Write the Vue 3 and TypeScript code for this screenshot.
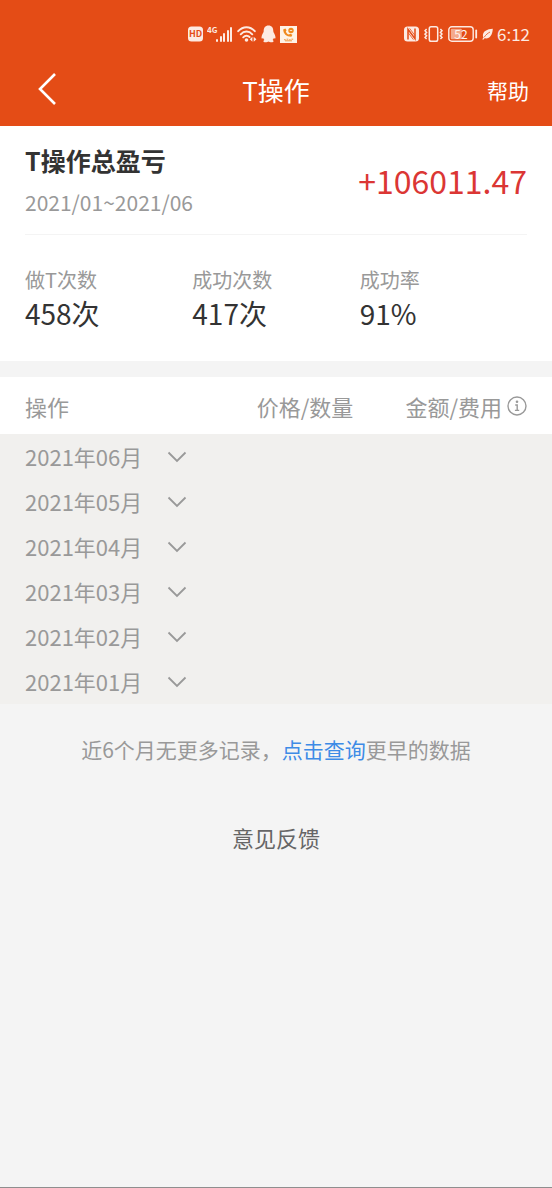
<script setup lang="ts">
import { ref } from 'vue'

interface Stat {
  label: string
  value: string
}

const stats: Stat[] = [
  { label: '做T次数', value: '458次' },
  { label: '成功次数', value: '417次' },
  { label: '成功率', value: '91%' },
]

const months: string[] = ['06', '05', '04', '03', '02', '01'].map((m) => `2021年${m}月`)
const opened = ref<string | null>(null)

function toggle(month: string): void {
  opened.value = opened.value === month ? null : month
}
</script>

<template>
  <div class="page">
    <header class="top">
      <div class="status">
        <div class="status-group">
          <svg width="15" height="16" viewBox="0 0 15 16">
            <rect x="0" y="0.5" width="15" height="15" rx="3.5" fill="#fdeae2" />
            <text x="7.5" y="11.3" text-anchor="middle" font-size="9" font-weight="700" fill="#e44c16">HD</text>
          </svg>
          <svg width="26" height="18" viewBox="0 0 26 18">
            <text x="0" y="8" font-size="8" font-weight="700" fill="#fdeae2">4G</text>
            <g fill="#fdeae2">
              <rect x="9" y="14" width="2" height="3" rx="1" />
              <rect x="13" y="11" width="2" height="6" rx="1" />
              <rect x="16" y="8" width="2" height="9" rx="1" />
              <rect x="20" y="5" width="2" height="12" rx="1" />
              <rect x="23" y="2" width="2" height="15" rx="1" />
            </g>
          </svg>
          <svg width="20" height="18" viewBox="0 0 20 18">
            <g fill="none" stroke="#fdeae2" stroke-width="1.9" stroke-linecap="round">
              <path d="M1.2 6.2C6 0.9 13 0.9 17.8 6.2" />
              <path d="M3.7 9.3C7 5.6 12 5.6 15.3 9.3" />
              <path d="M6.2 12.3C8.2 10.2 10.8 10.2 12.6 12" />
            </g>
            <circle cx="9.5" cy="15" r="1.8" fill="#fdeae2" />
            <path d="M15.4 11.8v5L12.8 14.3zM16.7 11.8v5l2.7-2.5z" fill="#fdeae2" />
          </svg>
          <svg width="15" height="18" viewBox="0 0 15 18">
            <path
              d="M7.5 0.6C4.2 0.6 2.6 3 2.7 6.2C2.6 7.5 0.6 9.8 0.5 12.3C0.5 14 1.2 14 2 12.8C2.3 13.7 2.8 14.4 3.4 14.9C2 15.5 2 17.3 4.4 17.3C5.8 17.3 7 16.9 7.5 16.5C8 16.9 9.2 17.3 10.6 17.3C13 17.3 13 15.5 11.6 14.9C12.2 14.4 12.7 13.7 13 12.8C13.8 14 14.5 14 14.5 12.3C14.4 9.8 12.4 7.5 12.3 6.2C12.4 3 10.8 0.6 7.5 0.6z"
              fill="#fdeae2"
            />
          </svg>
          <svg width="17" height="17" viewBox="0 0 17 17">
            <rect width="17" height="17" fill="#fff3e6" />
            <path d="M3.2 3.4C3.4 7.6 6 10.5 11.4 10.7L12.4 8.8L10.2 7.7L9 8.6C7.4 8 6.3 6.9 5.8 5.4L6.6 4.3L5.3 2.5z" fill="#f08a1d" />
            <circle cx="11" cy="4.5" r="2.7" fill="#f08a1d" />
            <path d="M9.8 4.5h2.4" stroke="#fff3e6" stroke-width="0.8" />
            <path d="M4 13.7h1.7M6.6 13.2h1.7M9.2 13.7h1.4M11.4 13.2h1.8M5 14.8h7" stroke="#ee9a48" stroke-width="1" />
          </svg>
        </div>
        <div class="status-group">
          <svg width="16" height="16" viewBox="0 0 16 16">
            <rect x="0" y="0.5" width="15" height="15" rx="3.5" fill="#fdeae2" />
            <path d="M4 13.6V3.2L11 12.8V2.4" fill="none" stroke="#e44c16" stroke-width="1.5" />
            <path d="M5.6 2.4L11 9.6M4 6.4L9.4 13.6" stroke="#e44c16" stroke-width="0.8" />
          </svg>
          <svg width="20" height="16" viewBox="0 0 20 16">
            <g fill="none" stroke="#fdeae2" stroke-width="1.5">
              <rect x="5.3" y="0.8" width="8.4" height="14.4" rx="1.8" />
              <path d="M2.6 3L1 4.7L2.6 6.4L1 8.1L2.6 9.8L1 11.5L2.6 13M16.4 3L18 4.7L16.4 6.4L18 8.1L16.4 9.8L18 11.5L16.4 13" />
            </g>
          </svg>
          <div class="battery">
            <svg width="30" height="16" viewBox="0 0 30 16">
              <rect x="0.8" y="0.8" width="24.4" height="14.4" rx="3" fill="none" stroke="#fdeae2" stroke-width="1.4" />
              <rect x="2.8" y="2.8" width="11" height="10.4" rx="1" fill="#f4a98d" />
              <path d="M28.2 4.5v7" stroke="#fdeae2" stroke-width="1.8" stroke-linecap="round" />
            </svg>
            <span class="level">52</span>
          </div>
          <svg width="11" height="12" viewBox="0 0 11 12">
            <path d="M10.8 0.8C5 1 0.9 3.4 0.9 7.5C0.9 8.4 1.1 9 1.5 9.5L0.3 11.2L1.2 11.8L2.6 10.3C7.4 11.3 10.4 7.5 10.8 0.8z" fill="#fdeae2" />
            <path d="M2.2 9.2C4 6.6 5.8 5.2 8 4" fill="none" stroke="#e44c16" stroke-width="0.8" />
          </svg>
          <span class="clock">6:12</span>
        </div>
      </div>
      <nav class="nav">
        <button class="back" type="button" aria-label="返回">
          <svg width="20" height="34" viewBox="0 0 20 34">
            <path d="M18 2L3 17L18 32" fill="none" stroke="#fff" stroke-width="2.6" />
          </svg>
        </button>
        <h1 class="title">T操作</h1>
        <a class="help" href="#help">帮助</a>
      </nav>
    </header>

    <section class="card">
      <div class="summary">
        <div>
          <h2 class="heading">T操作总盈亏</h2>
          <p class="range">2021/01~2021/06</p>
        </div>
        <p class="profit">+106011.47</p>
      </div>
      <dl class="stats">
        <div v-for="s in stats" :key="s.label" class="stat">
          <dt>{{ s.label }}</dt>
          <dd>{{ s.value }}</dd>
        </div>
      </dl>
    </section>

    <table class="records">
      <thead>
        <tr>
          <th class="col-op" scope="col">操作</th>
          <th class="col-price" scope="col">价格/数量</th>
          <th class="col-amount" scope="col">
            <span class="with-info">
              金额/费用
              <button class="info" type="button" aria-label="费用说明">
                <svg width="20" height="20" viewBox="0 0 20 20">
                  <circle cx="10" cy="10" r="9" fill="none" stroke="#999" stroke-width="1.4" />
                  <circle cx="10" cy="5.7" r="1.3" fill="#999" />
                  <path d="M8.2 9H10.2V14.2M7.9 14.4H12.2" fill="none" stroke="#999" stroke-width="1.4" />
                </svg>
              </button>
            </span>
          </th>
        </tr>
      </thead>
      <tbody>
        <tr v-for="m in months" :key="m">
          <td colspan="3">
            <button class="month" type="button" :aria-expanded="opened === m" @click="toggle(m)">
              {{ m }}
              <svg width="20" height="12" viewBox="0 0 20 12">
                <path d="M1.5 1.5L10 10L18.5 1.5" fill="none" stroke="#999" stroke-width="1.8" />
              </svg>
            </button>
          </td>
        </tr>
      </tbody>
    </table>

    <p class="more">近6个月无更多记录，<a href="#earlier">点击查询</a>更早的数据</p>
    <a class="feedback" href="#feedback">意见反馈</a>
  </div>
</template>

<style>
body {
  margin: 0;
}
</style>

<style scoped>
.page {
  display: flex;
  flex-direction: column;
  box-sizing: border-box;
  min-height: 100vh;
  border-bottom: 1px solid #8e8e8e;
  background: #f4f4f4;
  color: #999;
  font-family: "Noto Sans CJK SC", sans-serif;
}
h1,
h2,
p,
dl,
dd {
  margin: 0;
}
button {
  padding: 0;
  border: 0;
  background: none;
  color: inherit;
  font: inherit;
  cursor: pointer;
}
a {
  text-decoration: none;
}
svg {
  display: block;
  flex: none;
}
.top {
  background: #e44c16;
  color: #fff;
}
.status {
  display: flex;
  justify-content: space-between;
  align-items: center;
  box-sizing: border-box;
  height: 56px;
  padding: 12px 22px 0 34%;
}
.status-group {
  display: flex;
  align-items: center;
  gap: 4px;
}
.battery {
  position: relative;
}
.level {
  position: absolute;
  top: 0;
  left: 0;
  width: 26px;
  color: #fff5f0;
  font-size: 12px;
  line-height: 16px;
  text-align: center;
}
.clock {
  color: #fdeae2;
  font-size: 17px;
  line-height: 20px;
}
.nav {
  display: grid;
  grid-template-columns: 1fr auto 1fr;
  align-items: center;
  height: 68px;
  padding: 0 23px 2px;
}
.back {
  justify-self: start;
  padding: 0 14px 2px;
}
.title {
  font-size: 26px;
  font-weight: 400;
  line-height: 36px;
}
.help {
  justify-self: end;
  color: #fff;
  font-size: 21px;
  line-height: 30px;
}
.card {
  padding: 0 25px;
  background: #fff;
}
.summary {
  display: flex;
  justify-content: space-between;
  align-items: center;
  padding: 19px 0 20px;
  border-bottom: 1px solid #f4f4f4;
}
.heading {
  margin-bottom: 15px;
  color: #333;
  font-size: 25px;
  font-weight: 700;
  line-height: 30px;
}
.range {
  font-size: 21px;
  line-height: 24px;
}
.profit {
  color: #db3634;
  font-size: 32px;
  line-height: 40px;
}
.stats {
  display: grid;
  grid-template-columns: repeat(3, 1fr);
  padding: 33px 0 30px;
}
.stat dt {
  margin-bottom: 3px;
  font-size: 20px;
  line-height: 24px;
}
.stat dd {
  color: #333;
  font-size: 28px;
  line-height: 36px;
}
.records {
  width: 100%;
  margin-top: 16px;
  border-collapse: collapse;
  table-layout: fixed;
  background: #f1f0ee;
  font-size: 22px;
}
.records th {
  box-sizing: border-box;
  height: 57px;
  padding: 0;
  background: #fff;
  font-weight: 400;
  line-height: 30px;
  text-align: right;
}
.records .col-op {
  width: 30%;
  padding-left: 25px;
  text-align: left;
}
.records .col-price {
  width: 34%;
}
.records .col-amount {
  padding-right: 25px;
}
.with-info {
  display: flex;
  justify-content: flex-end;
  align-items: center;
  gap: 5px;
}
.records td {
  height: 45px;
  padding: 0 25px;
}
.month {
  display: flex;
  align-items: center;
  gap: 25px;
  line-height: 45px;
}
.more {
  margin-top: 30px;
  font-size: 21px;
  line-height: 30px;
  text-align: center;
}
.more a {
  color: #3d8be6;
}
.feedback {
  align-self: center;
  margin-top: 57px;
  color: #666;
  font-size: 22px;
  line-height: 32px;
}
</style>
